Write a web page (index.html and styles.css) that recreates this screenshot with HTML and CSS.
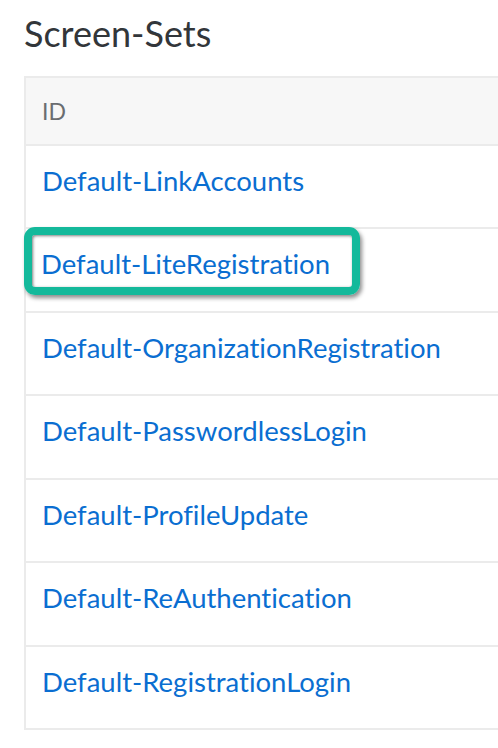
FILE: index.html
```html
<!DOCTYPE html>
<html>
<head>
<meta charset="utf-8">
<link rel="stylesheet" href="styles.css">
</head>
<body>
<div class="page">
  <h1 class="title">Screen-Sets</h1>
  <table class="sets">
    <thead>
      <tr><th>ID</th></tr>
    </thead>
    <tbody>
      <tr><td><a class="link">Default-LinkAccounts</a></td></tr>
      <tr><td class="hl-cell"><span class="highlight"><a class="link">Default-LiteRegistration</a></span></td></tr>
      <tr><td><a class="link">Default-OrganizationRegistration</a></td></tr>
      <tr><td><a class="link">Default-PasswordlessLogin</a></td></tr>
      <tr><td><a class="link">Default-ProfileUpdate</a></td></tr>
      <tr><td><a class="link">Default-ReAuthentication</a></td></tr>
      <tr><td><a class="link">Default-RegistrationLogin</a></td></tr>
    </tbody>
  </table>
</div>
</body>
</html>
```
FILE: styles.css
```css
html, body {
  margin: 0;
  padding: 0;
  background: #ffffff;
  overflow: hidden;
}
body {
  font-family: Lato, "Liberation Sans", sans-serif;
  font-variant-ligatures: none;
  width: 498px;
  height: 748px;
}
.page {
  padding: 0 0 0 24px;
}
.title {
  margin: 0;
  height: 76px;
  box-sizing: border-box;
  padding-top: 13px;
  font-size: 36px;
  line-height: 40px;
  font-weight: 400;
  color: #32363a;
}
.sets {
  border-collapse: collapse;
  width: 474px;
}
.sets th,
.sets td {
  border: 2px solid #ebebeb;
  border-right: none;
  text-align: left;
  padding: 0 0 0 16px;
}
.sets th {
  background: #f7f7f7;
  height: 66px;
  font-size: 23px;
  font-weight: 400;
  color: #6a6d70;
}
.sets td {
  height: 69.43px;
  padding-bottom: 12px;
}
.link {
  color: #0a6ed1;
  font-size: 27.5px;
  text-decoration: none;
}
.hl-cell {
  position: relative;
}
.highlight {
  position: absolute;
  left: -2px;
  top: -2px;
  width: 336px;
  height: 68px;
  box-sizing: border-box;
  border: 8px solid #14b99b;
  border-radius: 11px;
  padding: 4px 0 0 9px;
  display: flex;
  align-items: center;
  box-shadow: 2px 3px 4px rgba(0, 0, 0, 0.45), inset 1px 1px 3px rgba(0, 0, 0, 0.5);
}
```
